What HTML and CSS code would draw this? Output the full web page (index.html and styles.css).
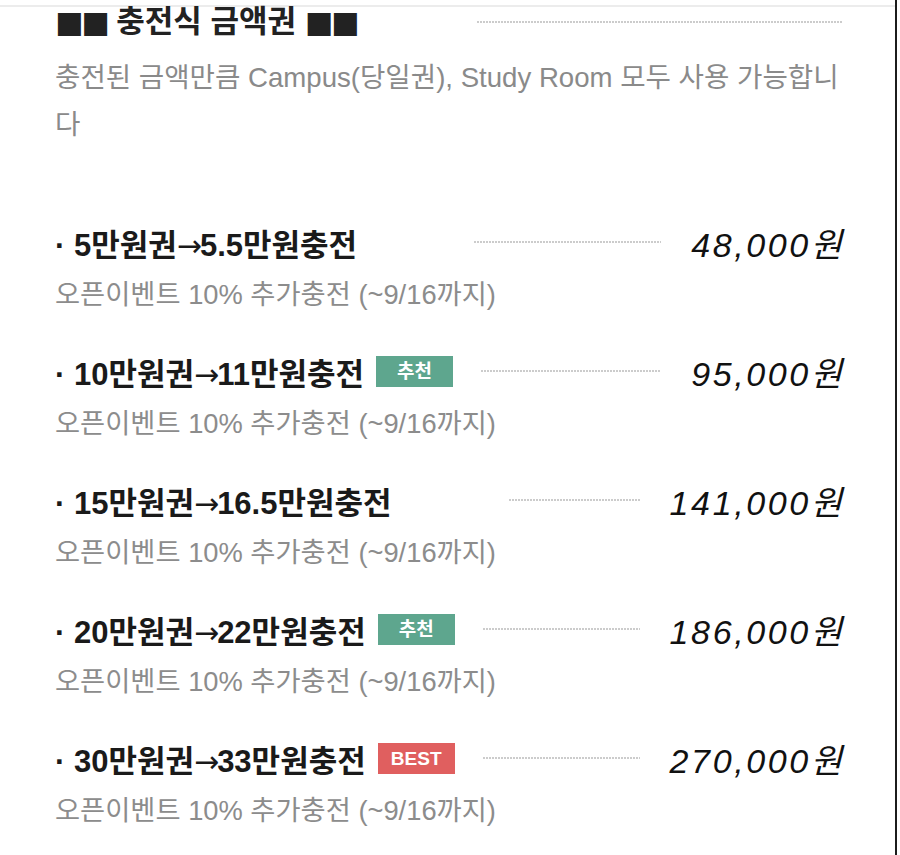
FILE: index.html
```html
<!DOCTYPE html>
<html lang="ko">
<head>
<meta charset="utf-8">
<title>충전식 금액권</title>
<link rel="stylesheet" href="styles.css">
</head>
<body>
<div class="frame">
  <div class="sheet">
    <div class="head-row">
      <h2 class="heading"><span class="sq">■■</span> 충전식 금액권 <span class="sq">■■</span></h2>
      <span class="dots head-dots"></span>
    </div>
    <p class="desc">충전된 금액만큼 Campus(당일권), Study Room 모두 사용 가능합니다</p>

    <ul class="list">
      <li class="item">
        <div class="row">
          <span class="name">· 5만원권<span class="arr">→</span>5.5만원충전</span>
          <span class="badge badge-none">추천</span>
          <span class="dots"></span>
          <span class="price">48,000<span class="won">원</span></span>
        </div>
        <div class="sub">오픈이벤트 10% 추가충전 (~9/16까지)</div>
      </li>
      <li class="item">
        <div class="row">
          <span class="name">· 10만원권<span class="arr">→</span>11만원충전</span>
          <span class="badge badge-rec">추천</span>
          <span class="dots"></span>
          <span class="price">95,000<span class="won">원</span></span>
        </div>
        <div class="sub">오픈이벤트 10% 추가충전 (~9/16까지)</div>
      </li>
      <li class="item">
        <div class="row">
          <span class="name">· 15만원권<span class="arr">→</span>16.5만원충전</span>
          <span class="badge badge-none">추천</span>
          <span class="dots"></span>
          <span class="price">141,000<span class="won">원</span></span>
        </div>
        <div class="sub">오픈이벤트 10% 추가충전 (~9/16까지)</div>
      </li>
      <li class="item">
        <div class="row">
          <span class="name">· 20만원권<span class="arr">→</span>22만원충전</span>
          <span class="badge badge-rec">추천</span>
          <span class="dots"></span>
          <span class="price">186,000<span class="won">원</span></span>
        </div>
        <div class="sub">오픈이벤트 10% 추가충전 (~9/16까지)</div>
      </li>
      <li class="item">
        <div class="row">
          <span class="name">· 30만원권<span class="arr">→</span>33만원충전</span>
          <span class="badge badge-best">BEST</span>
          <span class="dots"></span>
          <span class="price">270,000<span class="won">원</span></span>
        </div>
        <div class="sub">오픈이벤트 10% 추가충전 (~9/16까지)</div>
      </li>
    </ul>
  </div>
</div>
</body>
</html>
```

FILE: styles.css
```css
html, body {
  margin: 0;
  padding: 0;
  background: #ffffff;
}

body {
  font-family: "Liberation Sans", "Noto Sans CJK KR", sans-serif;
  color: #1a1a1a;
}

.frame {
  width: 897px;
  height: 855px;
  box-sizing: border-box;
  border-right: 2px solid #1c1c1c;
  padding-top: 5px;
  overflow: hidden;
}

.sheet {
  border-top: 2px solid #ececec;
  padding: 0 53px 0 55px;
}

.head-row {
  display: flex;
  align-items: center;
  height: 30px;
}

.heading {
  margin: 0;
  font-size: 31px;
  font-weight: bold;
  color: #222;
  line-height: 30px;
  white-space: nowrap;
}

.sq {
  font-family: "DejaVu Sans", sans-serif;
  font-size: 30px;
  letter-spacing: -2px;
}

.dots {
  flex: 1;
  height: 2px;
  background: linear-gradient(to right, #cccccc 0 2px, transparent 2px 3px);
  background-size: 3px 2px;
  background-repeat: repeat-x;
}

.head-dots {
  margin-left: 120px;
  margin-right: 0;
}

.desc {
  margin: 17px 0 0 0;
  font-size: 27.6px;
  line-height: 47px;
  color: #8a8a8a;
}

.list {
  list-style: none;
  margin: 71px 0 0 0;
  padding: 0;
}

.item {
  margin-bottom: 33px;
}

.row {
  display: flex;
  align-items: center;
  height: 46px;
}

.name {
  font-size: 31px;
  font-weight: bold;
  color: #1a1a1a;
  white-space: nowrap;
}

.arr {
  font-family: "DejaVu Sans", sans-serif;
  font-weight: normal;
  font-size: 30px;
  letter-spacing: -2px;
}

.badge {
  margin-left: 12px;
  width: 77px;
  height: 31px;
  line-height: 31px;
  text-align: center;
  color: #fff;
  font-size: 19px;
  font-weight: bold;
  flex: none;
}

.badge-none {
  visibility: hidden;
}

.badge-rec {
  background: #5ea68e;
}

.badge-best {
  background: #e05f5f;
}

.row .dots {
  margin: 0 30px 0 28px;
}

.price {
  font-size: 34px;
  font-style: italic;
  letter-spacing: 2.6px;
  color: #111;
  white-space: nowrap;
}

.won {
  letter-spacing: 0;
  margin-left: 0;
}

.sub {
  margin-top: 10px;
  font-size: 27.3px;
  line-height: 40px;
  color: #8c8c8c;
}
```
